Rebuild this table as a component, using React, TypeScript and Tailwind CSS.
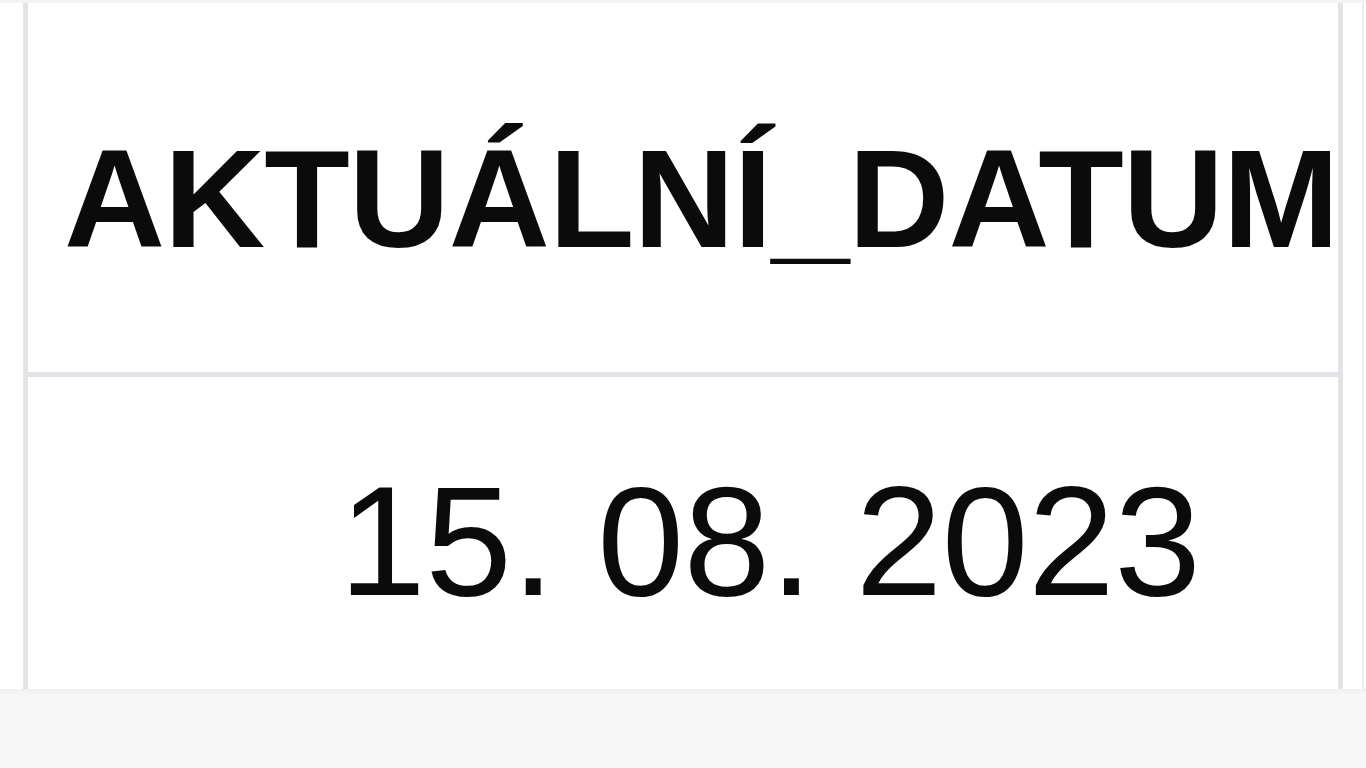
export default function App() {
  return (
    <div className="flex h-[768px] w-full flex-col overflow-hidden bg-white" style={{ fontFamily: '"Liberation Sans", Arial, sans-serif' }}>
      <div className="h-[3px] w-full bg-[#f3f3f4]" />
      <div className="flex">
        <div className="ml-[23px] w-[1320px] border-x-[5px] border-[#e3e3e7]">
          {/* header cell */}
          <div className="h-[374px] border-b-[5px] border-[#e3e3e7] pl-[36px] pt-[126px]">
            <div className="whitespace-nowrap text-[140px] font-bold leading-none tracking-[-1px] text-[#0b0b0b]">
              AKTUÁLNÍ_DATUM
            </div>
          </div>
          {/* value cell */}
          <div className="h-[312px] pl-[311px] pt-[86px]">
            <div className="whitespace-nowrap text-[156px] leading-none tracking-[-0.5px] text-[#0b0b0b]">15. 08. 2023</div>
          </div>
        </div>
        <div className="ml-[19px] w-[2px] bg-[#ececee]" />
      </div>
      <div className="h-[6px] w-full bg-gradient-to-b from-[#f0f0f2] to-[#f7f7f7]" />
      <div className="flex-1 bg-[#f7f7f7]" />
    </div>
  );
}
